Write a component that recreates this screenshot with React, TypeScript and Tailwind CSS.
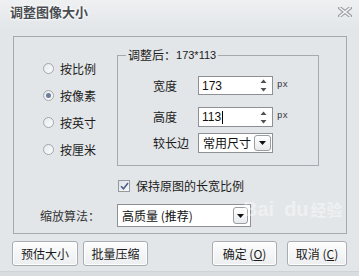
import React from "react";

const cjk = "font-['Microsoft_YaHei','Noto_Sans_CJK_SC',sans-serif]";

function Radio({ label, checked }: { label: string; checked?: boolean }) {
  return (
    <div className="flex h-[27px] items-center">
      <div className="flex h-[11px] w-[11px] items-center justify-center rounded-full border border-[#a3a6aa] bg-gradient-to-br from-[#e6e8eb] to-[#fbfcfd]">
        {checked && <div className="h-[5px] w-[5px] rounded-full bg-[#6a7d9c]" />}
      </div>
      <span className="ml-[6px] text-[12px] leading-[16px] text-[#1b1b1b]">{label}</span>
    </div>
  );
}

function Spin() {
  return (
    <div className="flex flex-col items-center gap-[5px]">
      <svg width="7" height="4" viewBox="0 0 7 4">
        <path d="M0.5 4 L3.5 0.5 L6.5 4 Z" fill="#505050" />
      </svg>
      <svg width="7" height="4" viewBox="0 0 7 4">
        <path d="M0.5 0 L3.5 3.5 L6.5 0 Z" fill="#505050" />
      </svg>
    </div>
  );
}

function DropBtn({ w = 17, h = 16 }: { w?: number; h?: number }) {
  return (
    <div
      className="flex items-center justify-center rounded-[3px] border border-[#9a9da1] bg-gradient-to-b from-[#ffffff] to-[#e8eaed]"
      style={{ width: w, height: h }}
    >
      <svg width="7" height="4" viewBox="0 0 7 4">
        <path d="M0 0 L7 0 L3.5 4 Z" fill="#111" />
      </svg>
    </div>
  );
}

function Btn({ children, w }: { children: React.ReactNode; w: number }) {
  return (
    <div
      className="flex h-[25px] items-center justify-center rounded-[3px] border border-[#a9acb0] bg-gradient-to-b from-[#fdfdfd] to-[#eceef0] text-[12px] text-[#1b1b1b] shadow-[inset_0_0_0_1px_#ffffff]"
      style={{ width: w }}
    >
      {children}
    </div>
  );
}

export default function App() {
  return (
    <div className={`relative flex h-[276px] w-[359px] flex-col overflow-hidden bg-[#e3e6e9] ${cjk}`}>
      {/* title bar */}
      <div className="flex h-[30px] items-start justify-between bg-gradient-to-b from-[#eef0f2] to-[#e3e6e9] pl-[10px] pr-[7px] pt-[4px]">
        <span className="text-[13px] font-bold leading-[16px] text-[#4a4d52] [text-shadow:0_0_3px_#ffffff,0_0_3px_#ffffff]">
          调整图像大小
        </span>
        <svg width="14" height="10" viewBox="0 0 14 10" className="mt-[3px]">
          <path d="M2 1 L12 9 M12 1 L2 9" stroke="#9a9da2" strokeWidth="3.6" strokeLinecap="square" />
          <path d="M2 1 L12 9 M12 1 L2 9" stroke="#f4f5f6" strokeWidth="1.6" strokeLinecap="square" />
        </svg>
      </div>

      {/* outer group */}
      <div className="ml-[13px] mt-[6px] flex h-[198px] w-[334px] flex-col border border-[#a6a9ad]">
        <div className="flex">
          <div className="ml-[29px] w-[74px] pt-[18px]">
            <Radio label="按比例" />
            <Radio label="按像素" checked />
            <Radio label="按英寸" />
            <Radio label="按厘米" />
          </div>
          <div className="relative mt-[18px] h-[111px] w-[202px] border border-[#a6a9ad]">
            <div className="absolute left-[8px] top-[-9px] flex items-center bg-[#e3e6e9] px-[2px] leading-[16px] text-[#1b1b1b]">
              <span className="text-[12px]">调整后：</span>
              <span className="font-['Liberation_Sans',sans-serif] text-[11px]">173*113</span>
            </div>
            <div className="ml-[35px] flex flex-col pt-[20px]">
              <div className="flex h-[19px] items-center">
                <span className="w-[45px] text-[12px] text-[#1b1b1b]">宽度</span>
                <div className="flex h-[19px] w-[75px] items-center justify-between border border-[#8d9095] bg-white pl-[3px] pr-[5px]">
                  <span className="font-['Liberation_Sans',sans-serif] text-[12px] text-[#111]">173</span>
                  <Spin />
                </div>
                <span className="ml-[4px] font-['Liberation_Mono',monospace] text-[9px] text-[#333]">px</span>
              </div>
              <div className="mt-[12px] flex h-[20px] items-center">
                <span className="w-[45px] text-[12px] text-[#1b1b1b]">高度</span>
                <div className="flex h-[20px] w-[75px] items-center justify-between border border-[#8d9095] bg-white pl-[3px] pr-[5px]">
                  <span className="flex items-center font-['Liberation_Sans',sans-serif] text-[12px] text-[#111]">
                    113<span className="ml-[1px] inline-block h-[13px] w-[1px] bg-black" />
                  </span>
                  <Spin />
                </div>
                <span className="ml-[4px] font-['Liberation_Mono',monospace] text-[9px] text-[#333]">px</span>
              </div>
              <div className="mt-[6px] flex h-[20px] items-center">
                <span className="w-[45px] text-[12px] text-[#1b1b1b]">较长边</span>
                <div className="flex h-[20px] w-[75px] items-center justify-between border border-[#8d9095] bg-white pl-[4px] pr-[1px]">
                  <span className="text-[12px] text-[#111]">常用尺寸</span>
                  <DropBtn w={17} h={16} />
                </div>
              </div>
            </div>
          </div>
        </div>

        {/* checkbox row */}
        <div className="ml-[104px] mt-[12px] flex items-center">
          <div className="flex h-[12px] w-[12px] items-center justify-center border border-[#96999d] bg-gradient-to-br from-[#dfe2e6] to-[#f8f9fa]">
            <svg width="9" height="8" viewBox="0 0 9 8">
              <path d="M1 4.2 L3.5 6.8 L8 1" stroke="#4d6186" strokeWidth="1.6" fill="none" />
            </svg>
          </div>
          <span className="ml-[6px] text-[12px] leading-[16px] text-[#1b1b1b]">保持原图的长宽比例</span>
        </div>

        {/* algorithm row */}
        <div className="mt-[10px] flex items-center">
          <span className="ml-[26px] w-[77px] text-[12px] text-[#333]">缩放算法：</span>
          <div className="flex h-[23px] w-[134px] items-center justify-between border border-[#8d9095] bg-white pl-[4px] pr-[2px]">
            <span className="text-[12px] text-[#111]">高质量 (推荐)</span>
            <DropBtn w={15} h={17} />
          </div>
        </div>
      </div>

      {/* buttons */}
      <div className="mt-[7px] flex items-center px-[12px]">
        <Btn w={66}>预估大小</Btn>
        <div className="w-[5px]" />
        <Btn w={65}>批量压缩</Btn>
        <div className="flex-1" />
        <Btn w={65}>
          确定 (<span className="underline">O</span>)
        </Btn>
        <div className="w-[10px]" />
        <Btn w={60}>
          取消 (<span className="underline">C</span>)
        </Btn>
      </div>

      <div className="absolute bottom-0 left-0 h-[5px] w-full border-t border-[#cfd2d6] bg-[#dadde0]" />

      {/* watermark */}
      <div className="pointer-events-none absolute left-[243px] top-[198px] flex items-end font-['Liberation_Sans',sans-serif] text-[20px] font-bold leading-[22px] text-white opacity-40">
        Bai<span className="ml-[10px]">du</span>
        <span className={`ml-[2px] text-[16px] ${cjk}`}>经验</span>
      </div>
    </div>
  );
}
